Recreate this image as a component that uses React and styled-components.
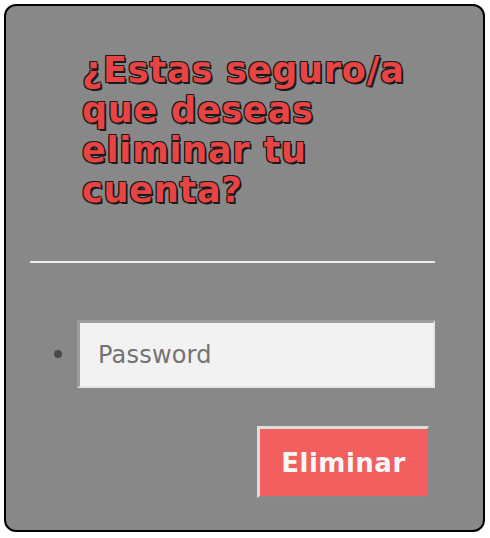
import styled, { createGlobalStyle } from "styled-components";

const GlobalStyle = createGlobalStyle`
  body {
    margin: 0;
    background: #ffffff;
    font-family: "DejaVu Sans", Verdana, sans-serif;
  }
`;

const Page = styled.div`
  padding: 4px;
`;

const Panel = styled.section`
  box-sizing: border-box;
  width: 481px;
  height: 528px;
  display: flex;
  flex-direction: column;
  padding: 0 48px 0 24px;
  background-color: #888888;
  border: 2px solid #000000;
  border-radius: 12px;
`;

const Title = styled.h1`
  margin: 44px 0 0 0;
  padding-left: 52px;
  max-width: 345px;
  font-size: 35px;
  line-height: 40px;
  letter-spacing: 0.8px;
  font-weight: bold;
  color: #e84444;
  text-shadow: -1px -1px 0 #1a1a1a, 1px -1px 0 #1a1a1a, -1px 1px 0 #1a1a1a,
    1px 1px 0 #1a1a1a, 2px 2px 0 #1a1a1a;
`;

const Divider = styled.hr`
  margin: 51px 0 0 0;
  height: 2px;
  border: none;
  background-color: #ececec;
`;

const FieldList = styled.ul`
  margin: 57px 0 0 0;
  padding-left: 47px;
  color: #4a4a4a;
`;

const FieldItem = styled.li`
  font-size: 26px;
`;

const PasswordInput = styled.input`
  box-sizing: border-box;
  width: 358px;
  height: 68px;
  padding: 0 18px;
  vertical-align: middle;
  background-color: #f2f2f2;
  border-style: solid;
  border-width: 3px 2px 2px 3px;
  border-color: #9c9c9c #e4e4e4 #e4e4e4 #9c9c9c;
  font-family: "DejaVu Sans", Verdana, sans-serif;
  font-size: 24px;
  letter-spacing: 0.2px;
  color: #333333;
  outline: none;

  &::placeholder {
    color: #737373;
  }
`;

const Actions = styled.div`
  display: flex;
  justify-content: flex-end;
  margin-top: 38px;
  padding-right: 6px;
`;

const DangerButton = styled.button`
  box-sizing: border-box;
  width: 172px;
  height: 72px;
  padding: 0;
  background-color: #f35f5f;
  border-style: solid;
  border-width: 3px 2px 2px 3px;
  border-color: #dcdcdc #8a8a8a #8a8a8a #dcdcdc;
  font-family: "DejaVu Sans", Verdana, sans-serif;
  font-size: 26px;
  letter-spacing: 0.5px;
  font-weight: bold;
  color: #f7f7f7;
  cursor: pointer;
`;

export default function App() {
  return (
    <Page>
      <GlobalStyle />
      <Panel>
        <Title>¿Estas seguro/a que deseas eliminar tu cuenta?</Title>
        <Divider />
        <FieldList>
          <FieldItem>
            <PasswordInput type="password" placeholder="Password" />
          </FieldItem>
        </FieldList>
        <Actions>
          <DangerButton type="button">Eliminar</DangerButton>
        </Actions>
      </Panel>
    </Page>
  );
}
